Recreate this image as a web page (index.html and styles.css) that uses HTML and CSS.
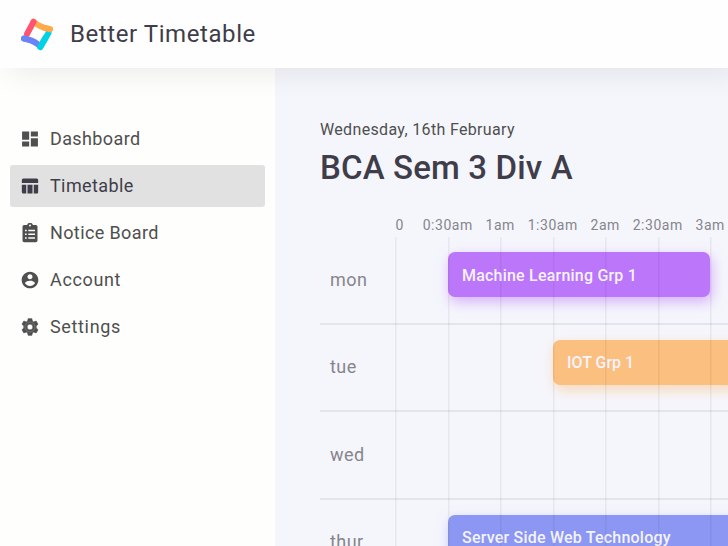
FILE: index.html
```html
<!DOCTYPE html>
<html lang="en">
<head>
<meta charset="utf-8">
<title>Better Timetable</title>
<link rel="stylesheet" href="styles.css">
</head>
<body>
<header class="topbar">
  <svg class="logo" viewBox="0 0 34 34" fill="none" stroke-width="6" stroke-linecap="round">
    <path d="M13.500 4.800Q20 10.400 30 12.300" stroke="#ffa94d"/>
    <path d="M28.500 16L20.300 30" stroke="#00d2e6"/>
    <path d="M30 12.300L26 11.200" stroke="#ffa94d"/>
    <path d="M18 27.300Q12 22.800 4 21.500" stroke="#6c83f7"/>
    <path d="M20.300 30L25.500 20.800" stroke="#00d2e6"/>
    <path d="M13.500 4.800L7 17" stroke="#ff5470"/>
    <path d="M4 21.500L8.200 22.600" stroke="#6c83f7"/>
  </svg>
  <span class="brand">Better Timetable</span>
</header>
<div class="layout">
  <nav class="sidebar">
    <a class="item"><svg class="icon" viewBox="0 0 24 24"><path d="M2.500 13H11V3H2.500v10zm0 8H11v-6H2.500v6zM13 21h8.500V11H13v10zm0-18v6h8.500V3H13z"/></svg><span class="label">Dashboard</span></a>
    <a class="item active"><svg class="icon" viewBox="0 0 24 24"><path d="M9 10.500h6V21H9zM16.500 21H20a1.500 1.500 0 0 0 1.800-1.500v-9h-5.300zM20 3H4a1.800 1.800 0 0 0-1.800 1.800V8.500h19.600V4.800A1.800 1.800 0 0 0 20 3zM2.200 19.200A1.800 1.800 0 0 0 4 21h3.500V10.500H2.200z"/></svg><span class="label">Timetable</span></a>
    <a class="item"><svg class="icon" viewBox="0 0 24 24"><path fill-rule="evenodd" d="M5 2.500h3.500a3.600 3.600 0 0 1 7 0H19a2 2 0 0 1 2 2V21a2 2 0 0 1-2 2H5a2 2 0 0 1-2-2V4.500a2 2 0 0 1 2-2zM12 1.800a1.200 1.200 0 1 0 0 2.400 1.200 1.200 0 0 0 0-2.400zM6 8v2h2V8zm4 0v1.800h8V8zM6 12.500v2h2v-2zm4 0v1.800h8v-1.800zM6 17v2h2v-2zm4 0v1.800h8V17z"/></svg><span class="label">Notice Board</span></a>
    <a class="item"><svg class="icon" viewBox="0 0 24 24"><path d="M12 2C6.480 2 2 6.480 2 12s4.480 10 10 10 10-4.480 10-10S17.520 2 12 2zm0 3c1.660 0 3 1.340 3 3s-1.340 3-3 3-3-1.340-3-3 1.340-3 3-3zm0 14.200c-2.500 0-4.710-1.280-6-3.220.03-1.990 4-3.080 6-3.080 1.990 0 5.970 1.090 6 3.080-1.290 1.940-3.500 3.220-6 3.220z"/></svg><span class="label wide">Account</span></a>
    <a class="item"><svg class="icon" viewBox="0 0 24 24"><path class="gear" fill-rule="evenodd" d="M9.800 2h4.400l.6 2.900 1.700 1 2.900-1 2.200 3.800-2.200 2v2.600l2.200 2-2.200 3.800-2.900-1-1.700 1-.6 2.900H9.800l-.6-2.900-1.700-1-2.900 1-2.200-3.800 2.200-2v-2.600l-2.200-2 2.200-3.800 2.900 1 1.700-1zM12 8.500a3.500 3.500 0 1 0 0 7 3.500 3.500 0 0 0 0-7z"/><circle class="ring" cx="12" cy="12" r="6"/></svg><span class="label wide">Settings</span></a>
  </nav>
  <main class="content">
    <p class="date">Wednesday, 16th February</p>
    <h1>BCA Sem 3 Div A</h1>
    <div class="hours">
      <span class="first">0</span><span>0:30am</span><span>1am</span><span>1:30am</span><span>2am</span><span>2:30am</span><span>3am</span>
    </div>
    <div class="board">
      <div class="row"><span class="day">mon</span><div class="track"><div class="event purple">Machine Learning Grp 1</div></div></div>
      <div class="row"><span class="day">tue</span><div class="track"><div class="event orange">IOT Grp 1</div></div></div>
      <div class="row"><span class="day">wed</span><div class="track"></div></div>
      <div class="row"><span class="day">thur</span><div class="track"><div class="event blue">Server Side Web Technology</div></div></div>
      <svg class="lines" viewBox="0 0 408 350"><path d="M75.750 0V350M128.750 0V350M180.750 0V350M233.750 0V350M285.750 0V350M338.750 0V350M390.750 0V350"/></svg>
    </div>
  </main>
</div>
</body>
</html>
```
FILE: styles.css
```css
* { box-sizing: border-box; }
body {
  margin: 0;
  width: 728px;
  height: 546px;
  overflow: hidden;
  background: #fefefd;
  color: #3f3d4a;
  font-family: Roboto, sans-serif;
}
.topbar {
  position: relative;
  z-index: 2;
  display: flex;
  align-items: center;
  gap: 16px;
  height: 68px;
  padding-left: 20px;
  background: #fefefe;
  box-shadow: 10px 5px 30px rgba(0, 0, 0, .08);
}
.logo { width: 34px; height: 34px; }
.brand { font-size: 24px; letter-spacing: .58px; white-space: nowrap; }
.layout { display: flex; height: 478px; }
.sidebar {
  flex: 0 0 275px;
  display: flex;
  flex-direction: column;
  gap: 5px;
  padding: 50px 10px 0;
}
.item {
  display: flex;
  align-items: center;
  gap: 10px;
  height: 42px;
  padding-left: 10px;
  border-radius: 3px;
  color: #4f4f4f;
  font-size: 18px;
  letter-spacing: .38px;
}
.item.active { background: #e1e1e1; color: #3f3d4a; }
.label { padding-bottom: 2px; }
.label.wide { letter-spacing: .65px; }
.icon { width: 20px; height: 20px; fill: currentColor; }
.gear { stroke: currentColor; stroke-width: .8; stroke-linejoin: round; }
.ring { fill: none; stroke: #8c8c8c; stroke-width: .7; }
.content {
  flex: 1;
  min-width: 0;
  padding: 51px 0 0 45px;
  background: #f5f6fc;
  overflow: hidden;
}
.date { margin: 0; font-size: 16px; line-height: 22px; letter-spacing: .34px; color: #4f4f4f; }
h1 { margin: 7px 0 0; font-size: 33px; line-height: 40px; font-weight: 500; letter-spacing: .15px; white-space: nowrap; }
.hours {
  display: flex;
  width: 500px;
  height: 21px;
  margin: 28px 0 0 49px;
  align-items: flex-start;
  font-size: 14px;
  line-height: 19px;
  color: #85858c;
}
.hours span { flex: 0 0 52.500px; text-align: center; letter-spacing: .55px; }
.hours .first { padding-left: 9px; }
.board { position: relative; width: 408px; }
.row {
  display: flex;
  align-items: center;
  height: 87.500px;
  border-bottom: 2px solid #e4e5ea;
}
.day { flex: 0 0 75px; padding: 0 0 1px 10px; font-size: 18px; letter-spacing: .45px; color: #85858c; }
.track { flex: 1; min-width: 0; }
.event {
  display: flex;
  align-items: center;
  height: 45px;
  padding: 1px 0 0 14px;
  margin-top: -10px;
  border-radius: 7px;
  color: #f5f3fc;
  font-size: 16px;
  font-weight: 500;
  letter-spacing: .21px;
  white-space: nowrap;
}
.purple { width: 262px; margin-left: 53px; background: #bb76fa; box-shadow: 2px 5px 13px rgba(187, 118, 250, .55); }
.orange { width: 300px; margin-left: 158px; background: #fbc080; box-shadow: 2px 5px 13px rgba(251, 192, 128, .55); letter-spacing: 0; }
.blue { width: 400px; margin-left: 53px; background: #8b97f2; box-shadow: 2px 5px 13px rgba(139, 151, 242, .55); }
.lines { position: absolute; inset: 0; width: 408px; height: 350px; fill: none; stroke: rgba(0, 0, 0, .055); stroke-width: 1.500; pointer-events: none; }
```
